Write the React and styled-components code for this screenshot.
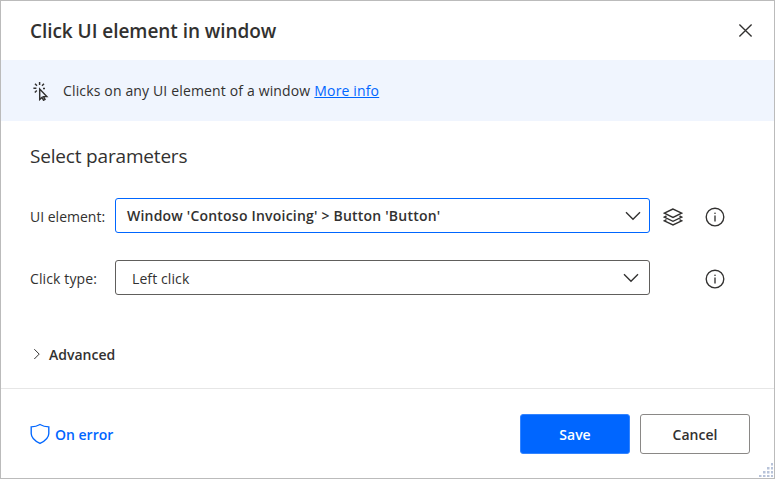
import React from "react";
import styled, { createGlobalStyle } from "styled-components";

const GlobalStyle = createGlobalStyle`
  * { box-sizing: border-box; }
  body { margin: 0; background: #fff; }
  button { font: inherit; }
`;

const Dialog = styled.main`
  position: relative;
  display: flex;
  flex-direction: column;
  width: 775px;
  height: 479px;
  border: 1px solid #bbb;
  background: #fff;
  color: #323130;
  font-family: "Open Sans", "Noto Sans", sans-serif;
  font-size: 14px;
  line-height: 20px;
`;

const Label = styled.span`
  padding-top: ${(p) => p.$drop || 0}px;
  white-space: nowrap;
  font-size: ${(p) => p.$size || 14}px;
  font-weight: ${(p) => p.$weight || 400};
  letter-spacing: ${(p) => p.$track || 0}px;
`;

const Header = styled.header`
  display: flex;
  align-items: center;
  justify-content: space-between;
  height: 59px;
  padding: 1px 21px 0 29px;
`;

const IconButton = styled.button`
  display: flex;
  padding: 0 0 1px;
  border: 0;
  background: none;
  color: inherit;
`;

const Banner = styled.section`
  display: flex;
  align-items: center;
  height: 61px;
  padding-left: 30px;
  background: #f0f5fe;
`;

const BannerText = styled.p`
  display: flex;
  gap: 4px;
  margin: 0 0 0 12px;
  padding-top: 1px;
`;

const Link = styled.a`
  color: #0066ff;
  text-decoration: underline;
  text-underline-offset: 1px;
  text-decoration-thickness: 1px;
`;

const Body = styled.section`
  height: 268px;
  padding: 21px 0 0 29px;
  border-bottom: 1px solid #e6e6e6;
`;

const Heading = styled.h2`
  margin: 0;
  height: 26px;
  line-height: 26px;
  font-weight: 400;
`;

const Field = styled.div`
  display: grid;
  grid-template-columns: 85px 535px 45px 39px;
  align-items: center;
  height: 35px;
  margin-top: ${(p) => p.$gap}px;
`;

const Select = styled.div`
  display: flex;
  align-items: center;
  justify-content: space-between;
  height: 35px;
  padding: 0 ${(p) => (p.$active ? 8 : 10)}px 0 ${(p) => (p.$active ? 11 : 16)}px;
  border: 1px solid ${(p) => (p.$active ? "#0066ff" : "#605e5c")};
  border-radius: 3px;
`;

const Slot = styled.span`
  display: flex;
  justify-content: center;
  grid-column: ${(p) => p.$column};
  padding-top: 3px;
`;

const Advanced = styled.div`
  display: flex;
  align-items: center;
  gap: 8px;
  margin: 48px 0 0 3px;
`;

const Footer = styled.footer`
  display: flex;
  align-items: center;
  height: 89px;
  padding: 1px 24px 0 29px;
`;

const ErrorLink = styled.div`
  display: flex;
  align-items: center;
  gap: 5px;
  margin-right: auto;
  color: #0066ff;
`;

const Button = styled.button`
  width: 110px;
  height: 40px;
  margin-left: 10px;
  padding: 1px 0 0;
  border: 1px solid ${(p) => (p.$primary ? "#3384ff" : "#8a8886")};
  border-radius: 3px;
  background: ${(p) => (p.$primary ? "#0066ff" : "#fff")};
  color: ${(p) => (p.$primary ? "#fff" : "#323130")};
`;

const Grip = styled.svg`
  position: absolute;
  right: 1px;
  bottom: 1px;
`;

const Icon = styled.svg`
  display: block;
  flex: none;
  fill: none;
  stroke: currentColor;
`;

const Chevron = () => (
  <Icon width="16" height="10" viewBox="0 0 16 10" strokeWidth="1.35"><path d="M1 1.3 8 8.3 15 1.3" /></Icon>
);

const Info = () => (
  <Icon width="20" height="20" viewBox="0 0 20 20" strokeWidth="1.35">
    <circle cx="10" cy="10" r="8.8" />
    <path d="M10 8.5v6" />
    <circle cx="10" cy="6.2" r=".8" fill="currentColor" stroke="none" />
  </Icon>
);

const Layers = () => (
  <Icon width="20" height="18" viewBox="0 0 20 18" strokeWidth="1.4">
    <path d="M10 1 1.3 5.2 10 9.4l8.7-4.2Z" />
    <path d="M3.5 8 1.3 9.1l8.7 4.2 8.7-4.2L16.5 8" />
    <path d="M3.5 11.7 1.3 12.8l8.7 4.2 8.7-4.2-2.2-1.1" />
  </Icon>
);

const ClickIcon = () => (
  <Icon width="20" height="20" viewBox="0 0 20 20" strokeWidth="1.45">
    <path d="M8.7 8v10.5l2.3-2.1 1.5 2.8 1.5-.8-1.4-2.8h3.2Z" />
    <path d="M8.6 1v3M2.4 7.3h3M4 2.8l2 2M13 2.8l-2 2M3.8 11.6l2-2M12 7.4h2" />
  </Icon>
);

const gripDots = [[12, 0], [8, 4], [12, 4], [4, 8], [8, 8], [12, 8], [0, 12], [4, 12], [8, 12], [12, 12]];

export default function App() {
  return (
    <>
      <GlobalStyle />
      <Dialog>
        <Header>
          <Label $size={19} $weight={600} $track={-0.05}>Click UI element in window</Label>
          <IconButton aria-label="Close">
            <Icon width="15" height="15" viewBox="0 0 15 15" strokeWidth="1.35"><path d="m1.4 1.4 12.2 12.2M13.6 1.4 1.4 13.6" /></Icon>
          </IconButton>
        </Header>
        <Banner>
          <ClickIcon />
          <BannerText>
            <Label $track={0.15}>Clicks on any UI element of a window</Label>
            <Link><Label $track={0.15}>More info</Label></Link>
          </BannerText>
        </Banner>
        <Body>
          <Heading><Label $size={19} $track={-0.18}>Select parameters</Label></Heading>
          <Field $gap={30}>
            <Label $drop={3}>UI element:</Label>
            <Select $active><Label $drop={1} $weight={600} $track={0.21}>Window 'Contoso Invoicing' &gt; Button 'Button'</Label><Chevron /></Select>
            <Slot $column={3}><Layers /></Slot>
            <Slot $column={4}><Info /></Slot>
          </Field>
          <Field $gap={27}>
            <Label $drop={3} $track={0.12}>Click type:</Label>
            <Select><Label $drop={3} $track={0.1}>Left click</Label><Chevron /></Select>
            <Slot $column={4}><Info /></Slot>
          </Field>
          <Advanced>
            <Icon width="8" height="12" viewBox="0 0 8 12"><path d="m1.3 1.2 4.9 4.9-4.9 4.9" /></Icon>
            <Label $drop={2} $weight={600}>Advanced</Label>
          </Advanced>
        </Body>
        <Footer>
          <ErrorLink>
            <Icon width="20" height="22" viewBox="0 0 20 22" strokeWidth="1.35"><path d="M10 1.5C7.5 3 4 3.8 1.2 3.8v6.6c0 4.5 3.8 7.5 8.8 10 5-2.5 8.8-5.5 8.8-10V3.8C16 3.8 12.5 3 10 1.5Z" /></Icon>
            <Label $drop={1} $weight={600}>On error</Label>
          </ErrorLink>
          <Button $primary><Label $weight={600}>Save</Label></Button>
          <Button><Label $weight={600}>Cancel</Label></Button>
        </Footer>
        <Grip width="14" height="14" viewBox="0 0 14 14" fill="#b8c3d9">
          {gripDots.map(([x, y]) => <rect key={`${x}-${y}`} x={x} y={y} width="2.5" height="2.5" />)}
        </Grip>
      </Dialog>
    </>
  );
}
